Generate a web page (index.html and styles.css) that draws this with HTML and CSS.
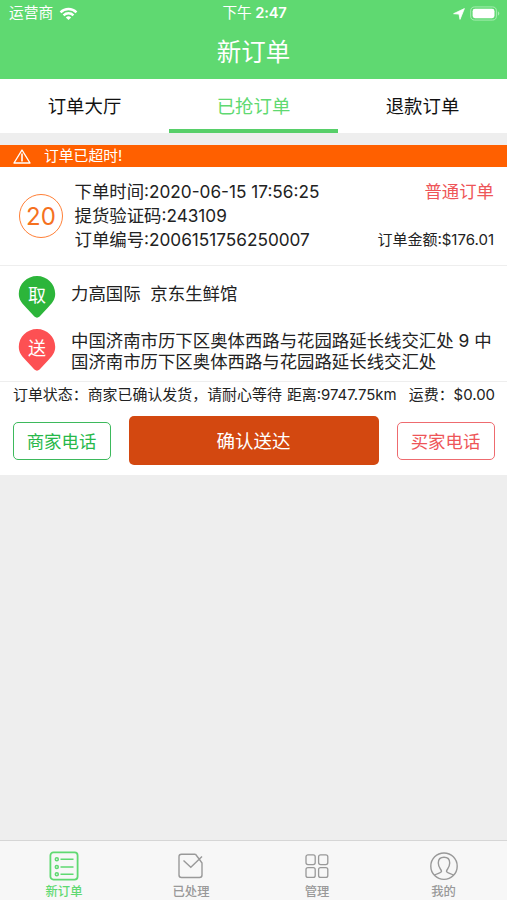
FILE: index.html
```html
<!DOCTYPE html>
<html lang="zh-CN">
<head>
<meta charset="utf-8">
<title>新订单</title>
<link rel="stylesheet" href="styles.css">
</head>
<body>
<div class="app">
  <header class="header">
    <div class="status">
      <div class="carrier">
        <span>运营商</span>
        <svg class="wifi" viewBox="0 0 20 14" fill="none" stroke="#fff" stroke-width="2.6"><path d="M1.6 5.2C6.3.7 13.7.7 18.4 5.2"/><path d="M4.8 8.4c2.9-2.8 7.5-2.8 10.4 0"/><path d="M7.2 10.6c1.6-1.5 4-1.5 5.6 0L10 13.4z" fill="#fff" stroke="none"/></svg>
      </div>
      <div class="clock">下午 <b>2:47</b></div>
      <div class="power">
        <svg class="arrow" viewBox="0 0 12 12" fill="#fff" stroke="#fff" stroke-width=".8" stroke-linejoin="round"><path d="M11.400.6 7 11.400 6 6.100.6 5.700z"/></svg>
        <svg class="battery" viewBox="0 0 31 15"><rect x=".7" y=".7" width="26.6" height="13.6" rx="4.2" fill="none" stroke="#a7edb1" stroke-width="1"/><rect x="2.7" y="2.7" width="22.6" height="9.6" rx="2.5" fill="#fff"/><path d="M28.8 5.2c2 .8 2 3.8 0 4.6z" fill="#a7edb1"/></svg>
      </div>
    </div>
    <h1 class="title">新订单</h1>
  </header>

  <nav class="tabs">
    <a class="tab">订单大厅</a>
    <a class="tab tab-active">已抢订单</a>
    <a class="tab">退款订单</a>
  </nav>

  <main class="card">
    <div class="alert">
      <svg class="warn" viewBox="0 0 18 15" fill="none" stroke="#fff" stroke-width="1.400" stroke-linejoin="round"><path d="M9 1 17 14H1z"/><path d="M9 4.500v8" stroke-width="1.600"/></svg>
      <span>订单已超时!</span>
    </div>

    <section class="summary">
      <div class="count">20</div>
      <div class="details">
        <p>下单时间<span class="num date">:2020-06-15 17:56:25</span></p>
        <p>提货验证码<span class="num code">:243109</span></p>
        <p>订单编号<span class="num serial">:2006151756250007</span></p>
      </div>
      <div class="aside">
        <p class="kind">普通订单</p>
        <p class="amount">订单金额:$176.01</p>
      </div>
    </section>

    <section class="route">
      <div class="stop">
        <div class="pin"><svg viewBox="0 0 38 44"><path fill="#2cb53a" d="M19 1C9 1 .8 8.900.8 18.800c0 5.500 2.700 9 6.300 12.600l9.300 10.200q2.600 2.300 5.200 0l9.300-10.200c3.600-3.600 6.300-7.100 6.300-12.600C37.200 8.900 29 1 19 1z"/></svg><span>取</span></div>
        <p class="place">力高国际&nbsp; 京东生鲜馆</p>
      </div>
      <div class="stop">
        <div class="pin"><svg viewBox="0 0 38 44"><path fill="#fd5053" d="M19 1C9 1 .8 8.900.8 18.800c0 5.500 2.700 9 6.300 12.600l9.300 10.200q2.600 2.300 5.200 0l9.300-10.200c3.600-3.600 6.300-7.100 6.300-12.600C37.200 8.900 29 1 19 1z"/></svg><span>送</span></div>
        <p class="place address">中国济南市历下区奥体西路与花园路延长线交汇处 9 中<br>国济南市历下区奥体西路与花园路延长线交汇处</p>
      </div>
    </section>

    <section class="state">
      <span class="progress">订单状态：商家已确认发货，请耐心等待</span>
      <span class="distance">距离:9747.75km</span>
      <span class="fee">运费：$0.00</span>
    </section>

    <section class="actions">
      <button class="call seller">商家电话</button>
      <button class="confirm">确认送达</button>
      <button class="call buyer">买家电话</button>
    </section>
  </main>

  <footer class="tabbar">
    <a class="item item-active">
      <svg viewBox="0 0 30 30" fill="none" stroke="currentColor" stroke-width="1.800"><rect x="1.400" y="1.400" width="27.200" height="27.200" rx="3"/><g stroke-width="1.500"><circle cx="7.800" cy="8.300" r="1.500"/><circle cx="7.800" cy="16" r="1.500"/><circle cx="7.800" cy="23.300" r="1.500"/><path d="M11.500 8.300H24.500M11.500 16H24.500M11.500 23.300H24.500"/></g></svg>
      <span>新订单</span>
    </a>
    <a class="item">
      <svg viewBox="0 0 30 30" fill="none" stroke="currentColor" stroke-width="1.400"><path d="M19.500 3.300H5.500Q3 3.300 3 5.800V24Q3 26.500 5.500 26.500H23.500Q26 26.500 26 24V12L23.500 8.500 19.500 3.300M7.500 9.500 14.800 16.200 26 5.500"/></svg>
      <span>已处理</span>
    </a>
    <a class="item">
      <svg viewBox="0 0 30 30" fill="none" stroke="currentColor" stroke-width="1.300"><rect x="4" y="3.800" width="9.200" height="9.800" rx="2"/><rect x="16.600" y="3.800" width="9.200" height="9.800" rx="2"/><rect x="4" y="16.600" width="9.200" height="9.800" rx="2"/><rect x="16.600" y="16.600" width="9.200" height="9.800" rx="2"/></svg>
      <span>管理</span>
    </a>
    <a class="item">
      <svg viewBox="0 0 30 30" fill="none" stroke="currentColor" stroke-width="1.400"><circle cx="15" cy="15.200" r="13.200"/><path d="M5.300 24.200C7.500 22.500 12.500 22.200 12.500 20.200 12.500 18.500 9.300 17 9.300 12 9.300 8.300 11.500 6.300 15 6.300S20.700 8.300 20.700 12C20.700 17 17.500 18.500 17.500 20.200 17.500 22.200 22.500 22.500 24.700 24.200"/></svg>
      <span>我的</span>
    </a>
  </footer>
</div>
</body>
</html>
```

FILE: styles.css
```css
* {
  box-sizing: border-box;
}

body {
  margin: 0;
  background: #eee;
  color: #222;
  font-family: Inter, "Noto Sans CJK SC", sans-serif;
}

h1,
p {
  margin: 0;
  font-weight: 400;
}

.app {
  display: flex;
  flex-direction: column;
  height: 900px;
  overflow: hidden;
  white-space: nowrap;
}

.header {
  height: 79px;
  background: #5fd971;
  color: #fff;
}

.status {
  display: grid;
  grid-template-columns: 1fr auto 1fr;
  align-items: center;
  height: 27px;
  padding: 0 7px 0 9px;
  font-size: 14.7px;
  line-height: 27px;
}

.carrier,
.power {
  display: flex;
  align-items: center;
}

.carrier {
  gap: 6px;
}

.wifi {
  width: 19px;
  height: 14px;
}

.clock {
  letter-spacing: -0.2px;
}

.clock b {
  font-weight: 600;
}

.power {
  justify-content: flex-end;
  gap: 5px;
}

.arrow {
  width: 12px;
  height: 12px;
}

.battery {
  width: 30px;
  height: 15px;
}

.title {
  height: 50px;
  font-size: 24.5px;
  line-height: 50px;
  text-align: center;
}

.tabs {
  display: grid;
  grid-template-columns: repeat(3, 1fr);
  height: 54px;
  background: #fff;
}

.tab {
  height: 54px;
  border-bottom: 4px solid transparent;
  color: #111;
  font-size: 18.4px;
  line-height: 55px;
  text-align: center;
}

.tab-active {
  border-color: #57cf69;
  color: #5fd971;
}

.card {
  margin-top: 12px;
  height: 330px;
  background: #fff;
}

.alert {
  display: flex;
  align-items: center;
  gap: 13px;
  height: 22px;
  padding-left: 13px;
  background: #ff6000;
  color: #fff;
  font-size: 14.8px;
  line-height: 24px;
}

.warn {
  width: 18px;
  height: 15px;
}

.summary {
  display: flex;
  height: 99px;
  padding: 13px 13px 0 19px;
  border-bottom: 1px solid #eee;
}

.count {
  width: 44px;
  height: 44px;
  margin-top: 14px;
  border: 1.5px solid #ff8037;
  border-radius: 50%;
  color: #f5711f;
  font-size: 24px;
  line-height: 43px;
  text-align: center;
}

.details {
  margin-left: 11.5px;
  font-size: 17.4px;
  line-height: 24px;
}

.num {
  font-size: 17.2px;
}

.aside {
  display: flex;
  flex-direction: column;
  gap: 24px;
  margin-left: auto;
  line-height: 24px;
  text-align: right;
}

.kind {
  color: #ee5558;
  font-size: 17.4px;
}

.amount {
  font-size: 15px;
}

.route {
  height: 116px;
  padding: 9px 0 0 18px;
  border-bottom: 1px solid #eee;
}

.stop {
  display: flex;
  gap: 15px;
  height: 53px;
}

.pin {
  display: grid;
  width: 38px;
  height: 44px;
  color: #fff;
  font-size: 18px;
  line-height: 41px;
  text-align: center;
}

.pin > * {
  grid-area: 1 / 1;
}

.place {
  padding-top: 8px;
  font-size: 17.4px;
  line-height: 21px;
}

.address {
  padding-top: 2px;
}

.state {
  display: flex;
  height: 28px;
  padding: 0 12px 0 13px;
  font-size: 14.95px;
  line-height: 26px;
}

.distance {
  margin-left: 5px;
}

.fee {
  margin-left: auto;
}

.actions {
  display: flex;
  align-items: center;
  justify-content: space-between;
  height: 49px;
  margin-top: 6px;
  padding: 0 12px 0 13px;
}

.call,
.confirm {
  padding: 0 1px 1px 0;
  border-radius: 5px;
  font-family: inherit;
}

.call {
  width: 98px;
  height: 38px;
  border: 1.5px solid;
  background: #fff;
  font-size: 17.4px;
}

.seller {
  border-color: #3db95c;
  color: #27b84a;
}

.buyer {
  border-color: #ee6b6f;
  color: #ee5558;
}

.confirm {
  width: 250px;
  height: 49px;
  border: 0;
  background: #d34810;
  color: #fff;
  font-size: 18.5px;
}

.tabbar {
  display: grid;
  grid-template-columns: 128px 126px 126px 127px;
  height: 60px;
  margin-top: auto;
  border-top: 1px solid #d6d6d6;
  background: #f7f7f7;
}

.item {
  display: flex;
  flex-direction: column;
  align-items: center;
  padding-top: 10px;
  color: #999;
  font-size: 12.3px;
  font-weight: 500;
  line-height: 21px;
}

.item svg {
  width: 30px;
  height: 30px;
}

.item-active {
  color: #5fd971;
}
```
